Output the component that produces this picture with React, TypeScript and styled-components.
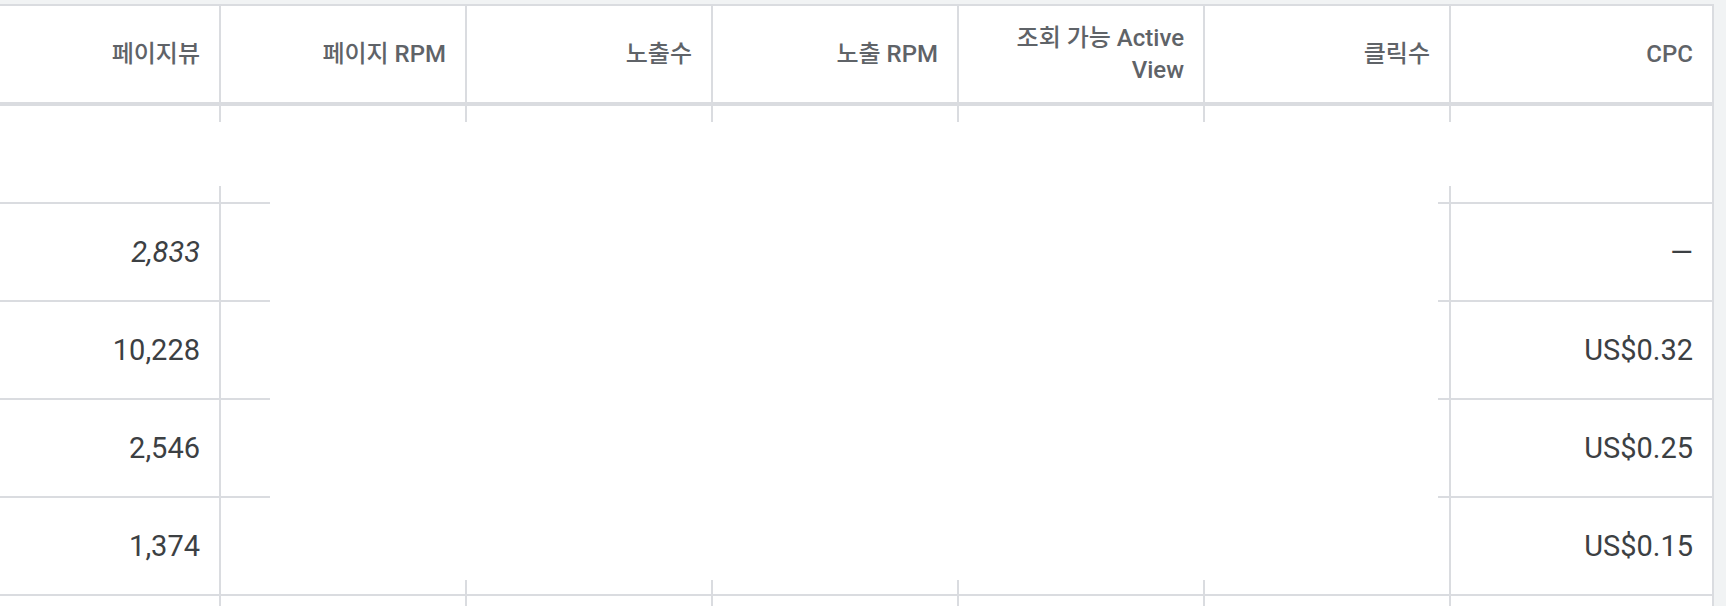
import React from "react";
import styled, { createGlobalStyle } from "styled-components";

const GlobalStyle = createGlobalStyle`
  html, body {
    margin: 0;
    padding: 0;
    background: #f1f3f4;
  }
  body {
    font-family: Roboto, "Noto Sans CJK KR", "Noto Sans", sans-serif;
  }
`;

const LINE = "#dadce0";

const Page = styled.div`
  height: 606px;
  overflow: hidden;
  padding-top: 4px;
  box-sizing: border-box;
  background: #f1f3f4;
`;

const Table = styled.div`
  position: relative;
  width: 1714px;
  background: #ffffff;
  border-top: 2px solid ${LINE};
  display: grid;
  grid-template-columns: 221px repeat(5, 246px) 1fr;
`;

const HeadCell = styled.div`
  height: 96px;
  border-right: 2px solid ${LINE};
  border-bottom: 4px solid ${LINE};
  padding: 0 19px 0 12px;
  display: flex;
  align-items: center;
  justify-content: flex-end;
  text-align: right;
  font-size: 24px;
  line-height: 32px;
  font-weight: 500;
  color: #5f6368;
`;

const Cell = styled.div<{ $italic?: boolean }>`
  height: 96px;
  border-bottom: 2px solid ${LINE};
  border-right: 2px solid ${LINE};
  padding: 0 19px 0 12px;
  display: flex;
  align-items: center;
  justify-content: flex-end;
  font-size: 29px;
  color: #3c4043;
  font-style: ${({ $italic }) => ($italic ? "italic" : "normal")};
  white-space: nowrap;
`;

/* white loading mask drawn over the table body */
const Mask = styled.div<{ $top: number; $left: number; $width: number; $height: number }>`
  position: absolute;
  background: #ffffff;
  top: ${({ $top }) => $top}px;
  left: ${({ $left }) => $left}px;
  width: ${({ $width }) => $width}px;
  height: ${({ $height }) => $height}px;
`;

const headers = ["페이지뷰", "페이지 RPM", "노출수", "노출 RPM", "조회 가능 Active View", "클릭수", "CPC"];

type Row = { cells: string[]; italic?: boolean };

const rows: Row[] = [
  { cells: ["", "", "", "", "", "", ""] },
  { cells: ["2,833", "US$0.00", "0", "—", "—", "0", "—"], italic: true },
  { cells: ["10,228", "US$2.13", "31,540", "US$0.69", "71.2%", "68", "US$0.32"] },
  { cells: ["2,546", "US$1.87", "7,904", "US$0.60", "68.4%", "19", "US$0.25"] },
  { cells: ["1,374", "US$1.42", "4,118", "US$0.47", "65.9%", "13", "US$0.15"] },
  { cells: ["", "", "", "", "", "", ""] },
];

export default function App() {
  return (
    <Page>
      <GlobalStyle />
      <Table>
        {headers.map((h) => (
          <HeadCell key={h}>
            {h === "조회 가능 Active View" ? (
              <span>
                조회 가능 Active
                <br />
                View
              </span>
            ) : (
              h
            )}
          </HeadCell>
        ))}
        {rows.map((r, i) =>
          r.cells.map((c, j) => (
            <Cell key={`${i}-${j}`} $italic={r.italic && j === 0}>
              {c}
            </Cell>
          ))
        )}
        <Mask $top={116} $left={0} $width={1712} $height={64} />
        <Mask $top={116} $left={270} $width={1168} $height={458} />
      </Table>
    </Page>
  );
}
